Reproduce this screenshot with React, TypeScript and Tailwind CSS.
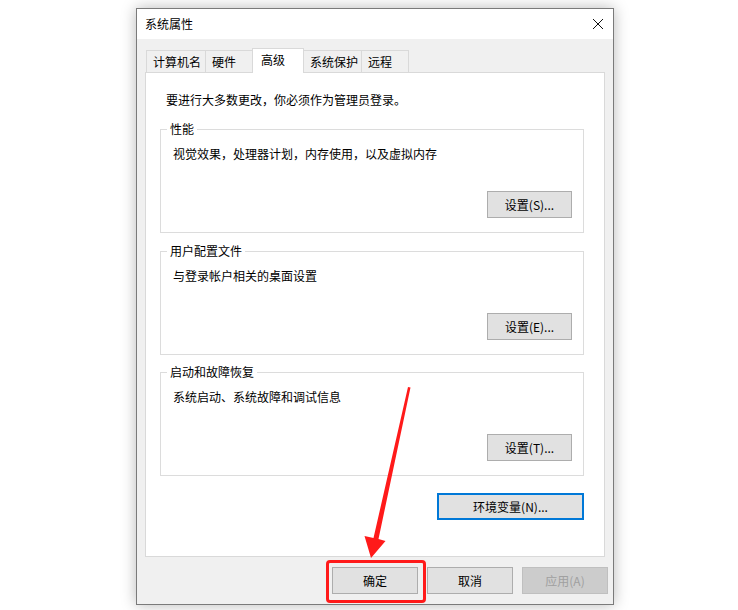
import React from "react";

type Tab = { label: string; width: string; active?: boolean };

const tabs: Tab[] = [
  { label: "计算机名", width: "w-[60px]" },
  { label: "硬件", width: "w-[48px]" },
  { label: "高级", width: "w-[52px]", active: true },
  { label: "系统保护", width: "w-[59px]" },
  { label: "远程", width: "w-[48px]" },
];

const btn =
  "h-[27px] flex items-center justify-center border border-[#adadad] bg-[#e1e1e1] text-[12px] leading-[16px] text-black";

const GroupBox = ({
  title,
  desc,
  action,
  className = "",
}: {
  title: string;
  desc: string;
  action: string;
  className?: string;
}) => (
  <div
    className={`relative h-[104px] border border-[#dcdcdc] flex flex-col pl-[12px] pr-[11px] pt-[16px] pb-[14px] ${className}`}
  >
    <span className="absolute -top-[9px] left-[6px] bg-white px-[3px] leading-[16px]">
      {title}
    </span>
    <p className="leading-[16px]">{desc}</p>
    <div className="mt-auto flex justify-end">
      <button className={`${btn} w-[85px]`}>{action}</button>
    </div>
  </div>
);

export default function App() {
  return (
    <div
      className="relative w-[738px] h-[610px] bg-white overflow-hidden text-[12px] text-black"
      style={{ fontFamily: '"Noto Sans CJK SC", "Noto Sans", sans-serif' }}
    >
      <div className="ml-[136px] mt-[8px] w-[478px] h-[597px] border border-[#7a7a7a] bg-[#f0f0f0] shadow-[0_0_14px_rgba(0,0,0,0.28)] flex flex-col">
        {/* title bar */}
        <div className="h-[30px] bg-white flex items-center justify-between pl-[8px] pr-[8px]">
          <span className="leading-[16px] text-[12px]">系统属性</span>
          <svg width="12" height="12" viewBox="0 0 12 12" className="mr-[1px]">
            <path d="M1 1 L11 11 M11 1 L1 11" stroke="#111" strokeWidth="1" fill="none" />
          </svg>
        </div>

        <div className="flex-1 flex flex-col px-[8px] pt-[9px]">
          {/* tabs */}
          <div className="h-[24px] flex items-end pl-[1px]">
            {tabs.map((t) =>
              t.active ? (
                <div
                  key={t.label}
                  className={`${t.width} h-[25px] -mb-px -ml-px relative z-10 bg-white border-t border-x border-[#d9d9d9] pl-[8px] pt-[3px] leading-[16px]`}
                >
                  {t.label}
                </div>
              ) : (
                <div
                  key={t.label}
                  className={`${t.width} h-[22px] -ml-px first:ml-0 bg-[#f0f0f0] border-t border-x border-[#d9d9d9] pl-[6px] pt-[3px] leading-[16px]`}
                >
                  {t.label}
                </div>
              )
            )}
          </div>

          {/* panel */}
          <div className="h-[485px] bg-white border border-[#d9d9d9] pt-[19px] pl-[14px] pr-[20px] flex flex-col">
            <p className="pl-[6px] leading-[16px]">要进行大多数更改，你必须作为管理员登录。</p>
            <GroupBox
              className="mt-[21px]"
              title="性能"
              desc="视觉效果，处理器计划，内存使用，以及虚拟内存"
              action="设置(S)..."
            />
            <GroupBox
              className="mt-[18px]"
              title="用户配置文件"
              desc="与登录帐户相关的桌面设置"
              action="设置(E)..."
            />
            <GroupBox
              className="mt-[17px]"
              title="启动和故障恢复"
              desc="系统启动、系统故障和调试信息"
              action="设置(T)..."
            />
            <div className="mt-[17px] flex justify-end">
              <button className="h-[27px] w-[147px] flex items-center justify-center border-2 border-[#0078d7] bg-[#e1e1e1] text-[12px] leading-[16px]">
                环境变量(N)...
              </button>
            </div>
          </div>

          {/* dialog buttons */}
          <div className="mt-[10px] flex justify-end gap-[9px] -mr-[3px]">
            <div className="relative">
              <button className={`${btn} w-[86px]`}>确定</button>
              <span className="absolute -left-[6px] -right-[8px] -top-[7px] -bottom-[9px] border-[3px] border-[#ff1a1a] rounded-[4px] pointer-events-none" />
            </div>
            <button className={`${btn} w-[86px]`}>取消</button>
            <button className="h-[27px] w-[86px] flex items-center justify-center border border-[#bfbfbf] bg-[#cccccc] text-[12px] leading-[16px] text-[#a0a0a0]">
              应用(A)
            </button>
          </div>
        </div>
      </div>

      {/* red arrow annotation */}
      <svg
        className="absolute left-0 top-0 pointer-events-none"
        width="738"
        height="610"
        viewBox="0 0 738 610"
      >
        <polygon
          points="408,387 410.5,387.5 378.5,539 385.5,541 371,558 364.5,536 373.5,538"
          fill="#ff1a1a"
        />
      </svg>
    </div>
  );
}
